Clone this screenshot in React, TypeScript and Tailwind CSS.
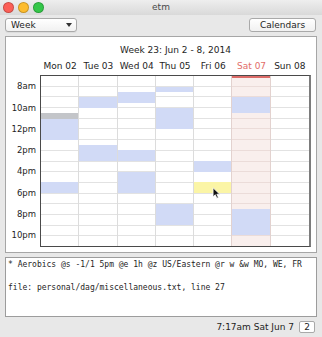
import React from "react";

type Ev = { s: number; e: number; c?: string };
type Day = { label: string; ev: Ev[]; today?: boolean };

const START = 7;
const HOURS = 16;

const days: Day[] = [
  {
    label: "Mon 02",
    ev: [
      { s: 10.5, e: 11, c: "bg-[#c3c5c9]" },
      { s: 11, e: 13 },
      { s: 17, e: 18 },
    ],
  },
  { label: "Tue 03", ev: [{ s: 9, e: 10 }, { s: 13.5, e: 15 }] },
  { label: "Wed 04", ev: [{ s: 8.5, e: 9.5 }, { s: 14, e: 15 }, { s: 16, e: 18 }] },
  { label: "Thu 05", ev: [{ s: 8, e: 8.5 }, { s: 10, e: 12 }, { s: 19, e: 21 }] },
  { label: "Fri 06", ev: [{ s: 15, e: 16 }, { s: 17, e: 18, c: "bg-[#fbf5a6]" }] },
  { label: "Sat 07", ev: [{ s: 9, e: 10.5 }, { s: 19.5, e: 22 }], today: true },
  { label: "Sun 08", ev: [] },
];

const hourLabels = ["8am", "10am", "12pm", "2pm", "4pm", "6pm", "8pm", "10pm"];

function Light({ color }: { color: string }) {
  return <div className={`w-[11px] h-[11px] rounded-full border border-black/20 ${color}`} />;
}

function Cursor() {
  return (
    <svg width="9" height="12" viewBox="0 0 10 14" className="absolute left-[18px] top-[111px] z-20">
      <path d="M1 1 L1 11.5 L3.6 9 L5.4 13 L7.2 12.2 L5.4 8.4 L8.8 8.4 Z" fill="#111" stroke="#fff" strokeWidth="0.9" />
    </svg>
  );
}

function DayColumn({ day, idx }: { day: Day; idx: number }) {
  const last = idx === days.length - 1;
  const border = last ? "" : idx === 4 || day.today ? "border-r border-[#e3d2cf]" : "border-r border-[#dcdcdc]";
  return (
    <div
      className={`relative flex flex-col ${border} ${
        day.today ? "bg-[#f9efed] shadow-[inset_0_2px_0_#dc6b68]" : ""
      }`}
    >
      {Array.from({ length: HOURS }).map((_, i) => (
        <div
          key={i}
          className={`flex-1 ${i < HOURS - 1 ? (day.today ? "border-b border-[#ebdcd9]" : "border-b border-[#e2e2e2]") : ""}`}
        />
      ))}
      {day.ev.map((ev, i) => (
        <div
          key={i}
          className={`absolute left-0 right-0 z-10 ${ev.c ?? "bg-[#d1daf6]"}`}
          style={{
            top: `${((ev.s - START) / HOURS) * 100}%`,
            height: `${((ev.e - ev.s) / HOURS) * 100}%`,
          }}
        />
      ))}
      {idx === 4 && <Cursor />}
    </div>
  );
}

export default function App() {
  return (
    <div className="w-[322px] h-[337px] overflow-hidden bg-[#e8e8e8] flex flex-col font-['DejaVu_Sans',sans-serif] text-[#1e1e1e]">
      {/* title bar */}
      <div className="h-[15px] flex items-center bg-gradient-to-b from-[#eeeeee] to-[#d9d9d9]">
        <div className="w-[60px] flex gap-[4px] pl-[3px]">
          <Light color="bg-[#fc5f57]" />
          <Light color="bg-[#fdbc2e]" />
          <Light color="bg-[#34c749]" />
        </div>
        <div className="flex-1 text-center text-[9px] leading-none text-[#4a4a4a]">etm</div>
        <div className="w-[60px]" />
      </div>

      {/* toolbar */}
      <div className="flex justify-between pt-[3px] pl-[5px] pr-[6px]">
        <div className="w-[72px] h-[14px] flex items-center justify-between pl-[5px] pr-[4px] rounded-[3px] border border-[#a9a9a9] bg-gradient-to-b from-white to-[#f1f1f1] text-[9px] leading-none shadow-[0_1px_0_rgba(0,0,0,0.05)]">
          <span>Week</span>
          <svg width="6" height="4" viewBox="0 0 6 4">
            <path d="M0 0 L6 0 L3 4 Z" fill="#333" />
          </svg>
        </div>
        <div className="w-[67px] h-[14px] flex items-center justify-center rounded-[3px] border border-[#a9a9a9] bg-gradient-to-b from-white to-[#f1f1f1] text-[9px] leading-none">
          Calendars
        </div>
      </div>

      {/* week panel */}
      <div className="mt-[4px] ml-[5px] w-[312px] border border-[#a6a6a6] bg-white pb-[5px]">
        <div className="mt-[7px] h-[12px] flex">
          <div className="w-[34px]" />
          <div className="w-[271px] text-center text-[9px] leading-[12px]">Week 23: Jun 2 - 8, 2014</div>
        </div>
        <div className="mt-[4px] h-[12px] flex">
          <div className="w-[34px]" />
          <div className="w-[271px] grid grid-cols-7 pl-[1px] pr-[2px] text-[9px] leading-[12px] text-center">
            {days.map((d) => (
              <div key={d.label} className={`whitespace-nowrap ${d.today ? "text-[#e26d6a]" : ""}`}>
                {d.label}
              </div>
            ))}
          </div>
        </div>
        <div className="mt-[3px] flex">
          <div className="w-[34px] h-[170px] my-[1px] flex flex-col">
            {hourLabels.map((h) => (
              <div key={h} className="flex-1 flex items-center justify-end pr-[4px] text-[8.5px] leading-none">
                {h}
              </div>
            ))}
          </div>
          <div className="w-[271px] h-[172px] grid grid-cols-7 border-t border-l border-b border-[#4a4a4a] border-r-2 border-r-[#7c7c7c]">
            {days.map((d, i) => (
              <DayColumn key={d.label} day={d} idx={i} />
            ))}
          </div>
        </div>
      </div>

      {/* details */}
      <div className="mt-[4px] ml-[5px] w-[312px] h-[60px] border border-[#9c9c9c] bg-white pt-[1px] pl-[2px] font-['DejaVu_Sans_Mono',monospace] text-[8px] leading-[11.5px] whitespace-pre">
        <div>* Aerobics @s -1/1 5pm @e 1h @z US/Eastern @r w &amp;w MO, WE, FR</div>
        <div>&nbsp;</div>
        <div>file: personal/dag/miscellaneous.txt, line 27</div>
      </div>

      {/* status */}
      <div className="flex-1 flex items-center justify-end gap-[5px] pr-[7px] text-[9px] leading-none">
        <span>7:17am Sat Jun 7</span>
        <div className="w-[16px] h-[12px] flex items-center justify-center rounded-[2px] border border-[#a9a9a9] bg-white">2</div>
      </div>
    </div>
  );
}
